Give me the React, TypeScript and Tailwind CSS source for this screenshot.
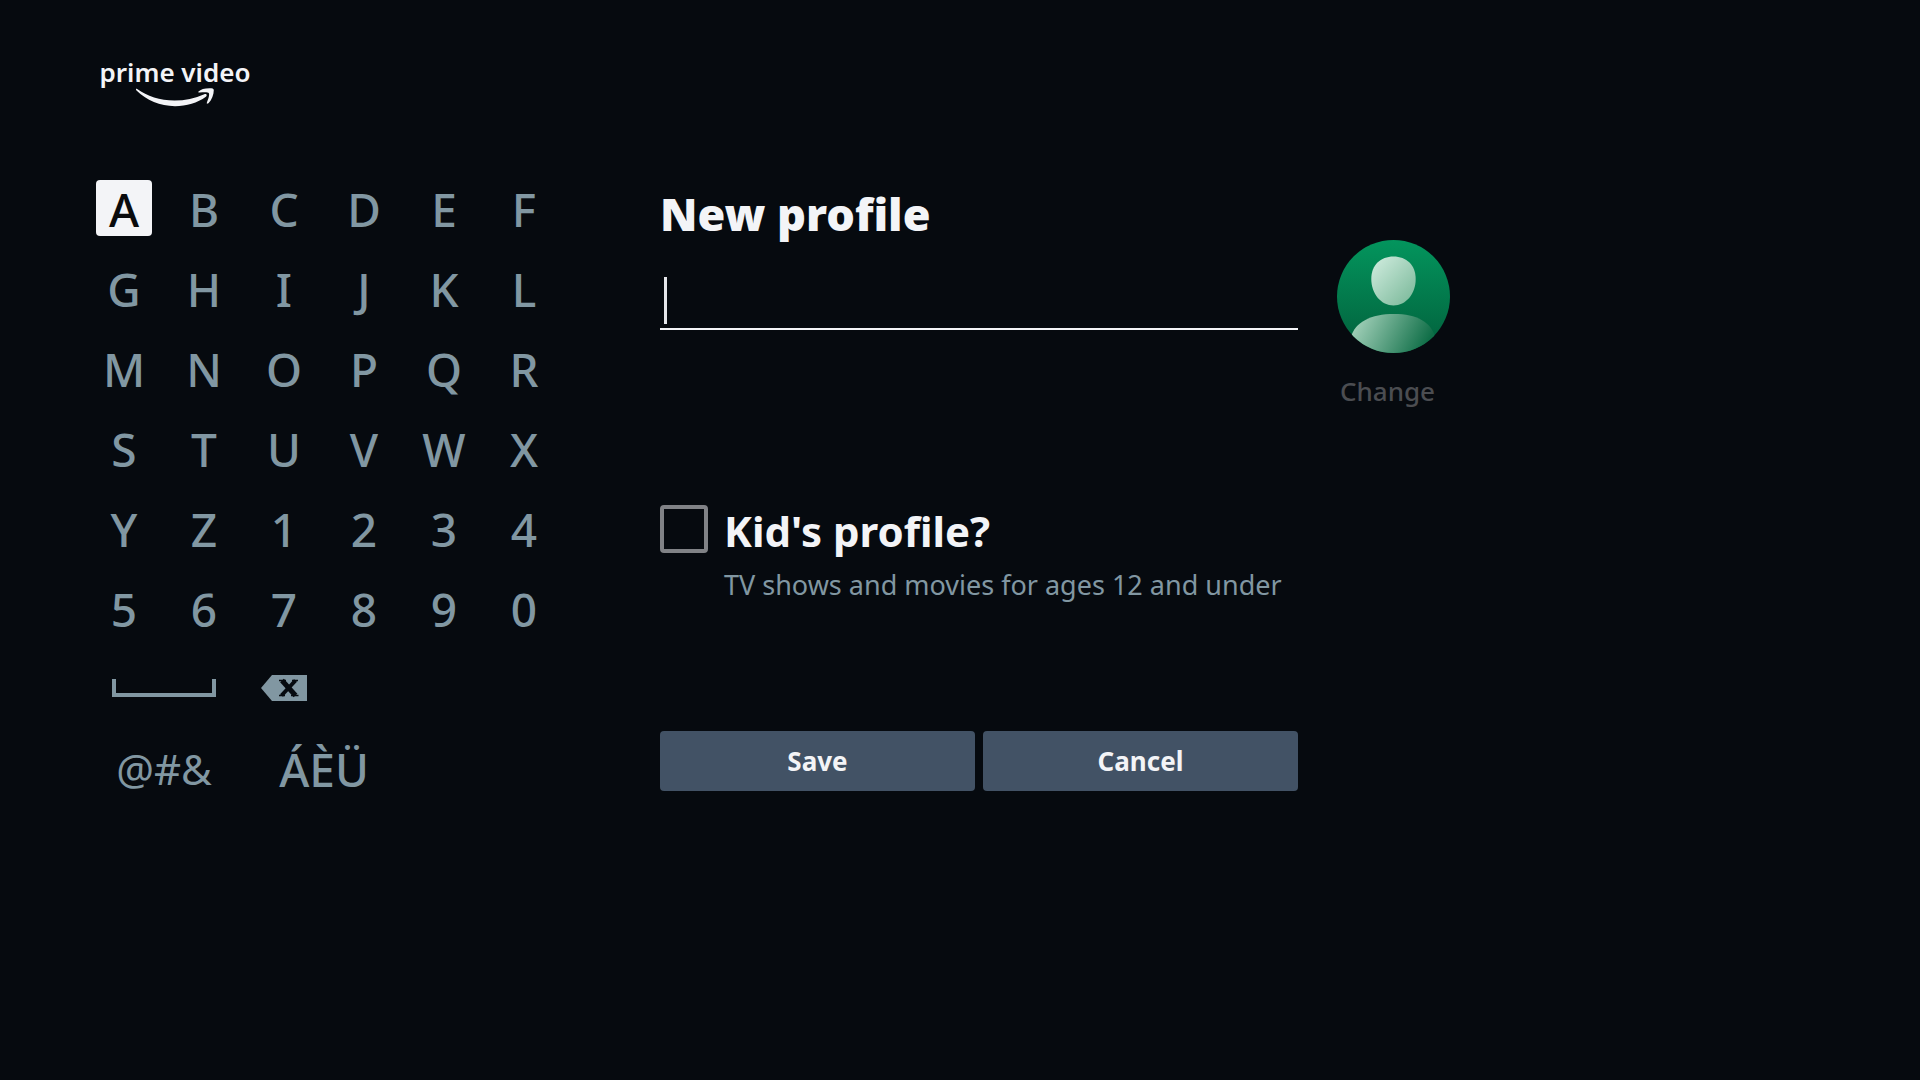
import { clsx } from 'clsx';
import { useState } from 'react';

const CHARACTER_KEYS = 'ABCDEFGHIJKLMNOPQRSTUVWXYZ1234567890'.split('');

type KeyProps = Readonly<{
  id: string;
  label?: string;
  focusedKey: string;
  onFocusKey: (id: string) => void;
  onPress?: () => void;
  className?: string;
  children: React.ReactNode;
}>;

function Key({ id, label, focusedKey, onFocusKey, onPress, className, children }: KeyProps) {
  return (
    <button
      type="button"
      aria-label={label}
      onFocus={() => onFocusKey(id)}
      onClick={onPress}
      className={clsx(
        'flex h-14 items-center justify-center rounded-sm outline-none',
        focusedKey === id ? 'bg-[#f3f4f7] text-[#0a0b0d]' : 'text-[#8197a2]',
        className,
      )}
    >
      {children}
    </button>
  );
}

function Logo() {
  return (
    <div className="flex w-[158px] flex-col items-center text-[#f3f4f7]">
      <span className="text-[26px] leading-8 font-semibold whitespace-nowrap">prime video</span>
      <svg viewBox="0 0 78 19" className="h-[19px] w-[78px]" fill="currentColor" aria-hidden="true">
        <path d="M1.2 1.1C11 8.3 24 12.6 38.5 12.6c10.5 0 20.5-2.3 29.8-6.3 1.9-.8 3.4 1 1.6 2.4C61.5 14.7 50.5 18.2 39 18.2 24 18.2 10.5 12.5.5 2.6-.6 1.5 0 .3 1.2 1.1z" />
        <path d="M62.5 3.5C64.5 1.4 68.5.2 73.5.2c2.7 0 4.3.4 4.3 1.7 0 4.5-1.9 9.9-5.4 13.4-.9.9-1.9.5-1.5-.7 1.1-3 2.8-7.6 2-9.3-.7-1.5-5-1.2-9.2-.8-1.3.1-1.8-.3-1.2-1z" />
      </svg>
    </div>
  );
}

function SpaceIcon() {
  return (
    <svg viewBox="0 0 104 18" className="h-[18px] w-[104px]" fill="none" aria-hidden="true">
      <path d="M2 0v16h100V0" stroke="currentColor" strokeWidth="4" />
    </svg>
  );
}

function BackspaceIcon() {
  return (
    <svg viewBox="0 0 46 26" className="h-[26px] w-[46px] shrink-0" aria-hidden="true">
      <path d="M0 13 11 0h35v26H11z" fill="currentColor" />
      <path d="m21 5.5 13.5 15" stroke="#060a0f" strokeWidth="5" />
      <path d="m34.5 5.500-14 15" stroke="#060a0f" strokeWidth="4" />
      <path d="M18 5.500h7M31 5.500h6M18 20.500h6M30 20.500h7.500" stroke="#060a0f" strokeWidth="1.500" />
    </svg>
  );
}

function Avatar() {
  return (
    <svg viewBox="0 0 113 113" className="h-[113px] w-[113px]" aria-hidden="true">
      <defs>
        <linearGradient id="disc" x1="0" y1="0" x2="0" y2="1">
          <stop offset="0" stopColor="#03955d" />
          <stop offset="1" stopColor="#025f3b" />
        </linearGradient>
        <linearGradient id="head" x1="0" y1="0" x2="1" y2="1">
          <stop offset="0" stopColor="#d3eee1" />
          <stop offset="1" stopColor="#76b696" />
        </linearGradient>
        <linearGradient id="body" gradientUnits="userSpaceOnUse" x1="20" y1="78" x2="86" y2="112">
          <stop offset="0" stopColor="#a3d1ba" />
          <stop offset="1" stopColor="#0f6e47" />
        </linearGradient>
        <clipPath id="round">
          <circle cx="56.5" cy="56.5" r="56.5" />
        </clipPath>
      </defs>
      <g clipPath="url(#round)">
        <rect width="113" height="113" fill="url(#disc)" />
        <path
          d="M56.5 16.5c13 0 22.2 8.5 22.2 22.5 0 15-10 26.5-22.2 26.5S34.3 54 34.3 39c0-14 9.2-22.5 22.2-22.5z"
          fill="url(#head)"
        />
        <path d="M14 97c4-15 20-23 43-23s37 8 41 23v16H14z" fill="url(#body)" />
      </g>
    </svg>
  );
}

export default function App() {
  const [name, setName] = useState('');
  const [isKid, setIsKid] = useState(false);
  const [focusedKey, setFocusedKey] = useState('A');

  const keyProps = { focusedKey, onFocusKey: setFocusedKey };
  const append = (text: string) => setName((current) => current + text);

  return (
    <div className="min-h-screen bg-[#060a0f] px-24 pt-14 pb-24 font-['Noto_Sans',sans-serif]">
      <header>
        <Logo />
      </header>

      <main className="mt-[73px] flex items-start">
        <div className="grid shrink-0 grid-cols-[repeat(6,56px)] gap-6 text-[46px] leading-14 font-medium">
          {CHARACTER_KEYS.map((character) => (
            <Key
              key={character}
              id={character}
              className="pt-0.5"
              onPress={() => append(character)}
              {...keyProps}
            >
              {character}
            </Key>
          ))}
          <Key id="space" label="Space" className="col-span-2" onPress={() => append(' ')} {...keyProps}>
            <SpaceIcon />
          </Key>
          <Key
            id="backspace"
            label="Backspace"
            onPress={() => setName((current) => current.slice(0, -1))}
            {...keyProps}
          >
            <BackspaceIcon />
          </Key>
          <Key
            id="symbols"
            className="col-span-2 col-start-1 pt-0.5 text-[42px] font-normal"
            {...keyProps}
          >
            @#&amp;
          </Key>
          <Key id="accents" className="col-span-2 pt-0.5" {...keyProps}>
            ÁÈÜ
          </Key>
        </div>

        <form className="ml-[108px] w-[638px]" onSubmit={(event) => event.preventDefault()}>
          <h1 className="pt-1.5 pb-0.5 text-[45px] leading-14 font-black text-[#f3f4f7]">
            <label htmlFor="profile-name">New profile</label>
          </h1>
          <div className="relative mt-6">
            <input
              id="profile-name"
              type="text"
              value={name}
              onChange={(event) => setName(event.target.value)}
              className="block h-[62px] w-full border-b-2 border-[#f3f4f7] px-1 text-[42px] text-[#f3f4f7] outline-none"
            />
            {name === '' ? <span className="absolute top-[9px] left-1 h-[47px] w-[3px] bg-[#e4e6ea]" /> : null}
          </div>

          <div className="mt-[175px] flex gap-4">
            <input
              id="kids-profile"
              type="checkbox"
              checked={isKid}
              onChange={(event) => setIsKid(event.target.checked)}
              className="h-12 w-12 shrink-0 appearance-none rounded-sm border-4 border-[#808286] checked:bg-[#808286]"
            />
            <div>
              <label
                htmlFor="kids-profile"
                className="block text-[42px] leading-[52px] font-bold whitespace-nowrap text-[#f3f4f7]"
              >
                Kid&apos;s profile?
              </label>
              <p className="mt-2 text-[27px] leading-10 whitespace-nowrap text-[#8197a2]">
                TV shows and movies for ages 12 and under
              </p>
            </div>
          </div>

          <div className="mt-[126px] grid grid-cols-2 gap-2 text-[26px] leading-8 font-bold text-[#f3f4f7]">
            <button type="submit" className="h-[60px] rounded-sm bg-[#425265]">
              Save
            </button>
            <button type="button" className="h-[60px] rounded-sm bg-[#425265]">
              Cancel
            </button>
          </div>
        </form>

        <button type="button" className="mt-[60px] ml-[39px] flex flex-col items-start text-[#4b4d51]">
          <Avatar />
          <span className="mt-[18px] px-[3px] text-[26px] leading-10 font-medium">Change</span>
        </button>
      </main>
    </div>
  );
}
